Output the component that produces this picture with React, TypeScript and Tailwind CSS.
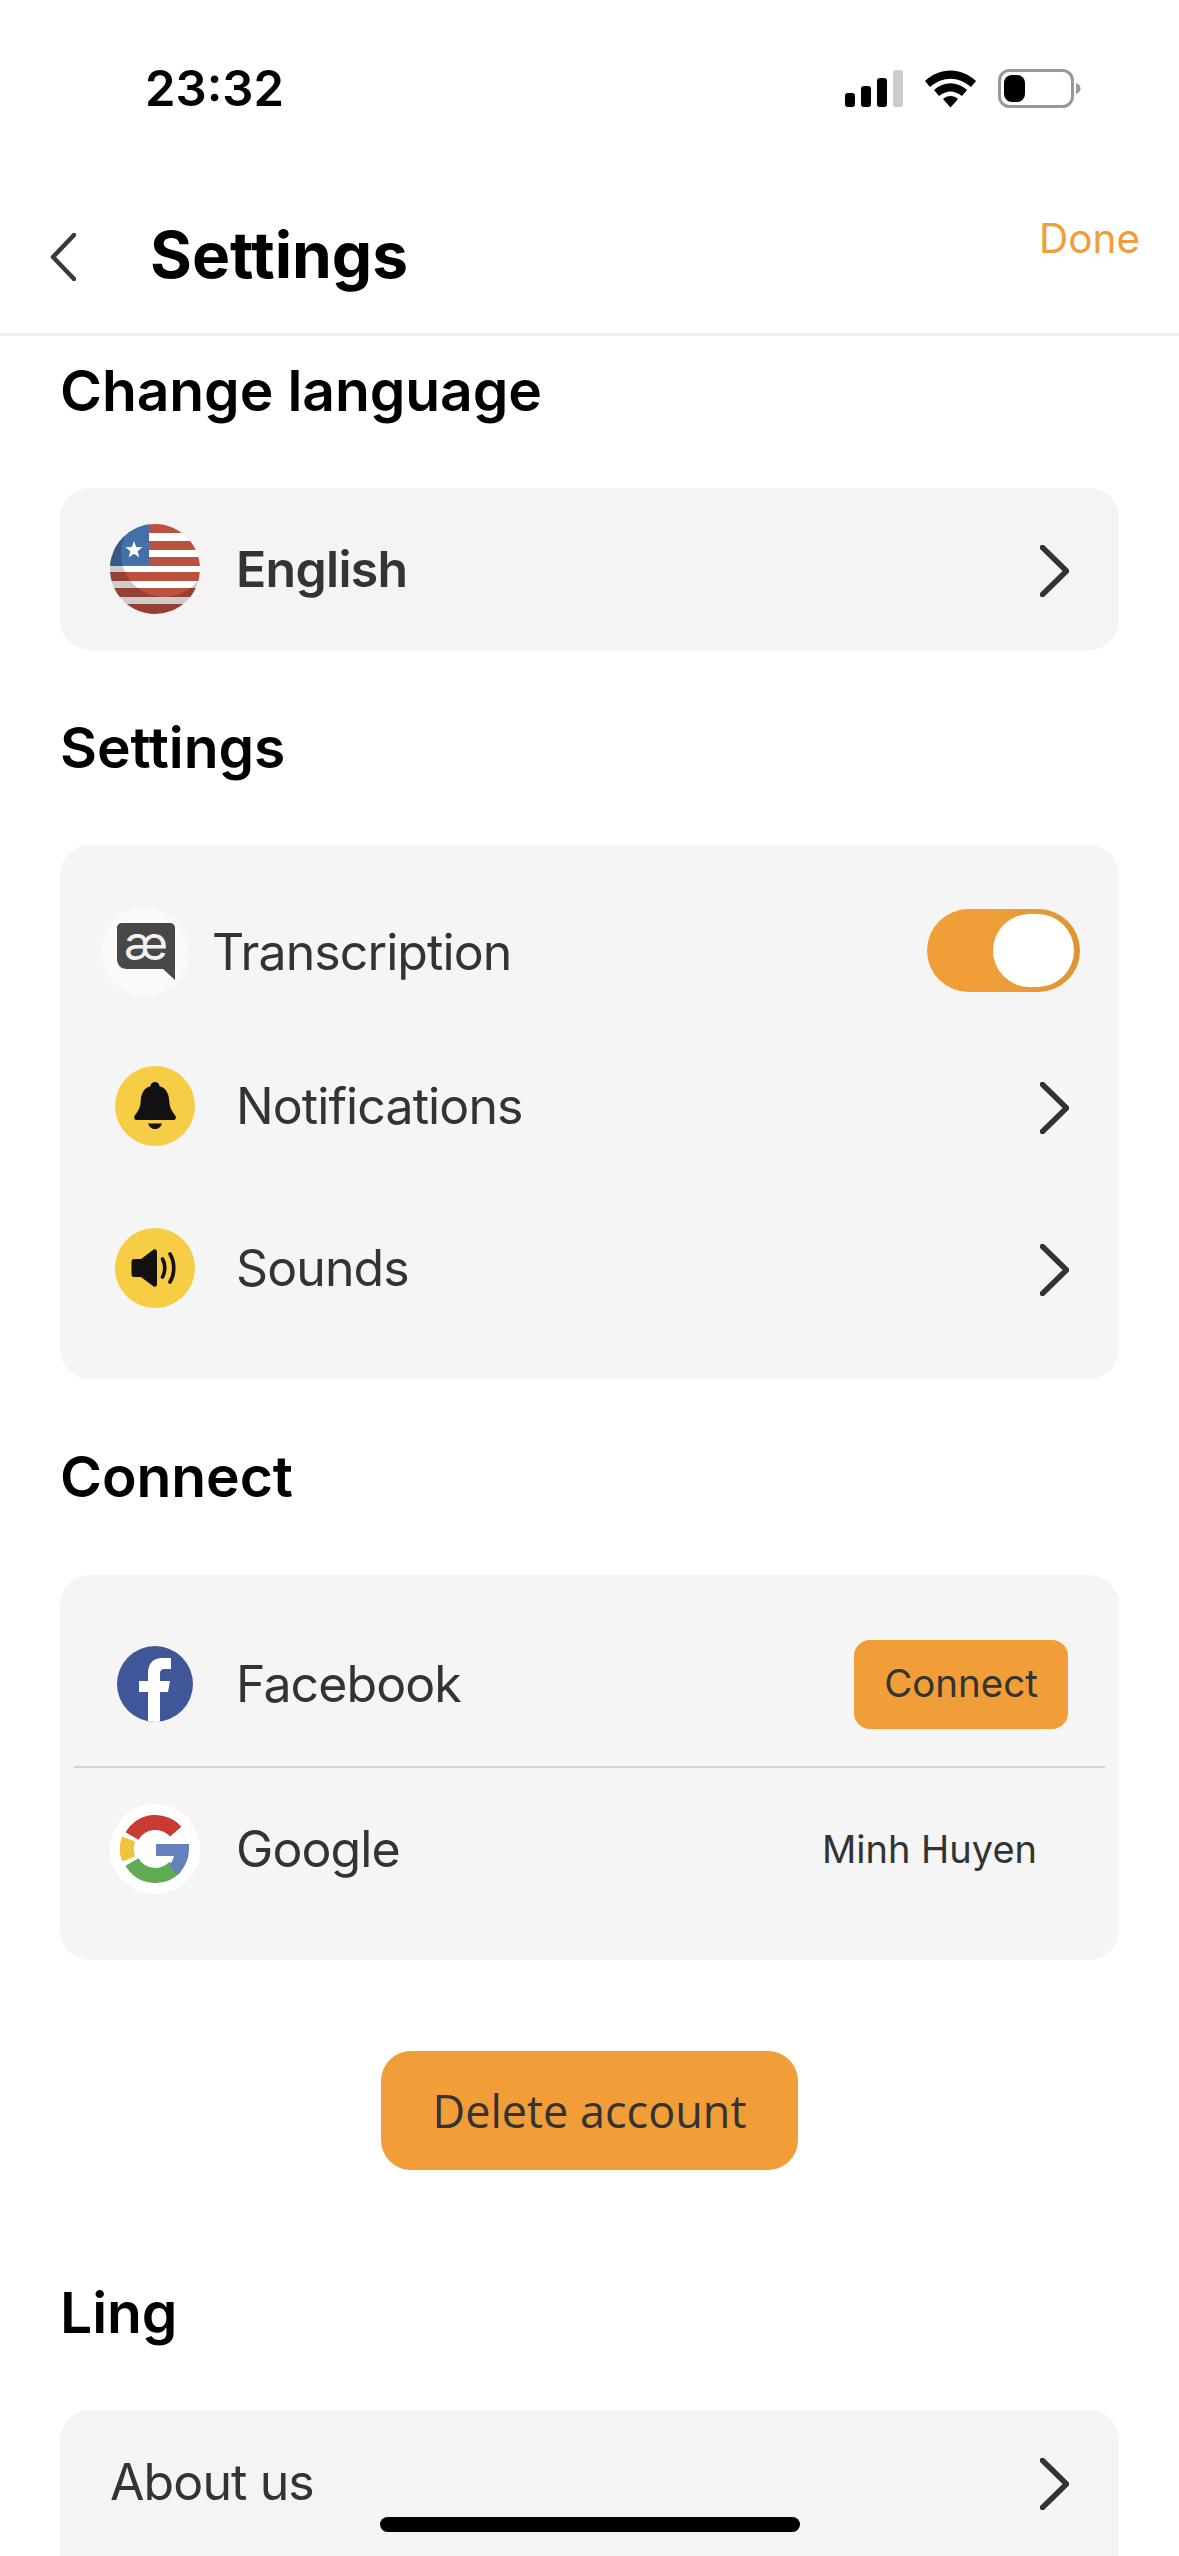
import type { ReactNode } from "react";

function Chevron() {
  return (
    <svg width="29" height="52" viewBox="0 0 29 52" fill="none" className="mt-[3px] shrink-0">
      <path d="M2.5 2.5 L26.5 26 L2.5 49.5" stroke="#333333" strokeWidth="5.5" strokeLinecap="round" strokeLinejoin="round" />
    </svg>
  );
}

function SignalIcon() {
  return (
    <svg width="58" height="38" viewBox="0 0 58 38">
      <rect x="0" y="23" width="10" height="14" rx="3" fill="#000" />
      <rect x="16" y="16" width="10" height="21" rx="3" fill="#000" />
      <rect x="32" y="8" width="10" height="29" rx="3" fill="#000" />
      <rect x="48" y="0" width="10" height="37" rx="3" fill="#cccccc" />
    </svg>
  );
}

function WifiIcon() {
  return (
    <svg width="51" height="38" viewBox="0 0 51 38">
      <path d="M0 11 C15 -3 36 -3 51 11 L46 17 C33 6 18 6 5 17 Z" fill="#000" />
      <path d="M9 20 C19 11 32 11 42 20 L37 26 C29 20 22 20 14 26 Z" fill="#000" />
      <path d="M18 29 C22 25 29 25 33 29 L25.5 37.5 Z" fill="#000" />
    </svg>
  );
}

function BatteryIcon() {
  return (
    <svg width="83" height="39" viewBox="0 0 83 39">
      <rect x="1.5" y="1.5" width="73" height="36" rx="10" fill="none" stroke="#999999" strokeWidth="3" />
      <rect x="6" y="6" width="21" height="27" rx="8" fill="#000" />
      <path d="M78 14 C81 15 82.5 17 82.5 19.5 C82.5 22 81 24 78 25 Z" fill="#999999" />
    </svg>
  );
}

function FlagIcon() {
  const reds = [0, 17, 33, 48, 64, 80];
  return (
    <svg width="90" height="90" viewBox="0 0 90 90" className="shrink-0">
      <defs>
        <clipPath id="flag-circle">
          <circle cx="45" cy="45" r="45" />
        </clipPath>
        <mask id="flag-shade">
          <rect width="90" height="90" fill="#fff" />
          <circle cx="54" cy="30" r="43" fill="#000" />
        </mask>
      </defs>
      <g clipPath="url(#flag-circle)">
        <rect width="90" height="90" fill="#ffffff" />
        {reds.map((y) => (
          <rect key={y} x="0" y={y} width="90" height={y === 80 ? 10 : 9} fill="#bc5140" />
        ))}
        <rect x="0" y="0" width="39" height="41" fill="#4370a8" />
        <path
          d="M24 17 L26.2 23 L32.5 23.2 L27.6 27.2 L29.3 33.3 L24 29.8 L18.7 33.3 L20.4 27.2 L15.5 23.2 L21.8 23 Z"
          fill="#ffffff"
        />
        <rect width="90" height="90" fill="#000" opacity="0.2" mask="url(#flag-shade)" />
      </g>
    </svg>
  );
}

function TranscriptionIcon() {
  return (
    <div className="flex h-[88px] w-[88px] shrink-0 items-center justify-center rounded-full bg-[#fafafa]">
      <svg width="88" height="88" viewBox="0 0 88 88">
        <path
          d="M21 15 H69 C72 15 74 17 74 20 V72 L62 61 H26 C20 61 16 57 16 51 V20 C16 17 18 15 21 15 Z"
          fill="#484848"
        />
        <text x="45" y="52" textAnchor="middle" fontSize="48" fontFamily="Inter, sans-serif" fill="#f2f2f2">
          æ
        </text>
      </svg>
    </div>
  );
}

function BellIcon() {
  return (
    <svg width="80" height="80" viewBox="0 0 80 80" className="shrink-0">
      <circle cx="40" cy="40" r="40" fill="#f6cd45" />
      <path
        d="M40 16 C37.5 16 35.5 18 35.5 20.2 C27 22.5 26 30 25.5 37 C25 43 22 46 19.5 50 C18.5 52 19.5 54 21.5 54 H58.5 C60.5 54 61.5 52 60.5 50 C58 46 55 43 54.5 37 C54 30 53 22.5 44.5 20.2 C44.5 18 42.5 16 40 16 Z"
        fill="#111111"
      />
      <path d="M33 57.5 H47 C46 61 43.5 63 40 63 C36.5 63 34 61 33 57.5 Z" fill="#111111" />
    </svg>
  );
}

function SoundIcon() {
  return (
    <svg width="80" height="80" viewBox="0 0 80 80" className="shrink-0">
      <circle cx="40" cy="40" r="40" fill="#f6cd45" />
      <path
        d="M19 31 H26 L38 22 C40 20.5 42 21.5 42 24 V56 C42 58.5 40 59.5 38 58 L26 49 H19 C17.5 49 16.5 48 16.5 46.5 V33.5 C16.5 32 17.5 31 19 31 Z"
        fill="#111111"
      />
      <path d="M47.5 31 C50.5 36 50.5 44 47.5 49" stroke="#111111" strokeWidth="3.6" strokeLinecap="round" fill="none" />
      <path d="M55 26 C60 34 60 46 55 54" stroke="#111111" strokeWidth="3.6" strokeLinecap="round" fill="none" />
    </svg>
  );
}

function FacebookIcon() {
  return (
    <svg width="76" height="76" viewBox="0 0 76 76" className="shrink-0">
      <defs>
        <clipPath id="fb-circle">
          <circle cx="38" cy="38" r="38" />
        </clipPath>
      </defs>
      <circle cx="38" cy="38" r="38" fill="#3f5698" />
      <path
        d="M31 76 V46 H22 V35 H31 V27 C31 17 37 12 45 12 H54 V23 H48 C44 23 43 25 43 28 V35 H53 L51 46 H43 V76 Z"
        fill="#ffffff"
        clipPath="url(#fb-circle)"
      />
    </svg>
  );
}

function GoogleIcon() {
  return (
    <svg width="90" height="90" viewBox="0 0 90 90" className="shrink-0">
      <circle cx="45" cy="45" r="45" fill="#ffffff" />
      <path d="M65.7 27.6 A27 27 0 0 0 22 32" stroke="#c83a33" strokeWidth="15" fill="none" />
      <path d="M18.7 35 A27 27 0 0 0 18.7 55" stroke="#efc23f" strokeWidth="14" fill="none" />
      <path d="M22 58 A27 27 0 0 0 65 63" stroke="#62ab55" strokeWidth="15" fill="none" />
      <path d="M46 40 H79 V45 C79 55 75 63 68 71 L59 62 C61 59 63 56 64 52 H46 Z" fill="#6481bd" />
    </svg>
  );
}

function Toggle() {
  return (
    <div className="-mt-[3px] flex h-[83px] w-[153px] shrink-0 items-center justify-end rounded-full bg-gradient-to-r from-[#f09f38] from-40% to-[#df9434] pr-[6px]">
      <div className="h-[73px] w-[81px] rounded-full bg-white" />
    </div>
  );
}

function Heading({ children, className }: { children: ReactNode; className: string }) {
  return <h2 className={`pl-[60px] text-[57px] leading-[70px] font-semibold tracking-[-0.1px] text-black ${className}`}>{children}</h2>;
}

function Row({ icon, label, right, className }: { icon?: ReactNode; label: string; right?: ReactNode; className: string }) {
  return (
    <div className={`flex items-center ${className}`}>
      {icon}
      <span className="flex-1 text-[50px] leading-[62px] tracking-[-0.9px] text-[#333333]">{label}</span>
      {right}
    </div>
  );
}

export default function App() {
  return (
    <div className="relative h-[2556px] w-[1179px] overflow-hidden bg-white font-[Inter,sans-serif]">
      {/* status bar */}
      <div className="flex h-[176px] items-center pr-[98px] pl-[145px]">
        <span className="flex-1 text-[49px] leading-none font-semibold text-black">23:32</span>
        <div className="flex items-end">
          <SignalIcon />
          <div className="ml-[22px]">
            <WifiIcon />
          </div>
          <div className="ml-[22px]">
            <BatteryIcon />
          </div>
        </div>
      </div>

      {/* header */}
      <div className="flex h-[160px] items-start border-b-[3px] border-[#efefef] pr-[39px] pl-[50px]">
        <svg width="26" height="48" viewBox="0 0 26 48" fill="none" className="mt-[57px] shrink-0">
          <path d="M24 2 L3 24 L24 46" stroke="#3a3a3a" strokeWidth="4.5" strokeLinecap="round" strokeLinejoin="round" />
        </svg>
        <h1 className="mt-[41px] ml-[74px] flex-1 text-[64px] leading-[76px] font-bold text-black">Settings</h1>
        <span className="mt-[38px] text-[40.5px] leading-[50px] text-[#f19e38]">Done</span>
      </div>

      {/* change language */}
      <Heading className="mt-[20px]">Change language</Heading>
      <div className="mx-[60px] mt-[62px] rounded-[30px] bg-[#f4f4f4]">
        <div className="flex h-[162px] items-center pr-[50px] pl-[50px]">
          <FlagIcon />
          <span className="ml-[36px] flex-1 text-[50px] leading-[62px] font-semibold tracking-[-0.7px] text-[#333333]">English</span>
          <Chevron />
        </div>
      </div>

      {/* settings */}
      <Heading className="mt-[63px]">Settings</Heading>
      <div className="mx-[60px] mt-[62px] rounded-[30px] bg-[#f5f5f5] pt-[34px] pb-[30px]">
        <Row
          className="h-[146px] pr-[39px] pl-[41px]"
          icon={
            <div className="mr-[23px]">
              <TranscriptionIcon />
            </div>
          }
          label="Transcription"
          right={<Toggle />}
        />
        <Row
          className="h-[162px] pr-[50px] pl-[55px]"
          icon={
            <div className="mr-[41px]">
              <BellIcon />
            </div>
          }
          label="Notifications"
          right={<Chevron />}
        />
        <Row
          className="h-[162px] pr-[50px] pl-[55px]"
          icon={
            <div className="mr-[41px]">
              <SoundIcon />
            </div>
          }
          label="Sounds"
          right={<Chevron />}
        />
      </div>

      {/* connect */}
      <Heading className="mt-[63px]">Connect</Heading>
      <div className="mx-[60px] mt-[63px] rounded-[30px] bg-[#f5f5f5] pb-[30px]">
        <Row
          className="h-[191px] pt-[27px] pr-[51px] pl-[57px]"
          icon={
            <div className="mr-[43px]">
              <FacebookIcon />
            </div>
          }
          label="Facebook"
          right={
            <button className="flex h-[89px] w-[214px] items-center justify-center rounded-[16px] bg-[#f19e38] text-[38.5px] text-[#333333]">
              Connect
            </button>
          }
        />
        <div className="mx-[14px] h-[2px] bg-[#d4d4d4]" />
        <Row
          className="h-[162px] pr-[82px] pl-[50px]"
          icon={
            <div className="mr-[36px]">
              <GoogleIcon />
            </div>
          }
          label="Google"
          right={<span className="text-[38px] leading-[48px] text-[#333333]">Minh Huyen</span>}
        />
      </div>

      <div className="mt-[91px] flex justify-center">
        <button className="flex h-[119px] w-[417px] items-center justify-center rounded-[30px] bg-[#f19e38] font-['Open_Sans',sans-serif] text-[45px] text-[#333333]">
          Delete account
        </button>
      </div>

      {/* ling */}
      <Heading className="mt-[108px]">Ling</Heading>
      <div className="mx-[60px] mt-[62px] h-[300px] rounded-[30px] bg-[#f4f4f4]">
        <Row className="h-[144px] pr-[50px] pl-[50px]" label="About us" right={<Chevron />} />
      </div>

      {/* home indicator */}
      <div className="absolute top-[2517px] left-[380px] h-[15px] w-[420px] rounded-full bg-black" />
    </div>
  );
}
